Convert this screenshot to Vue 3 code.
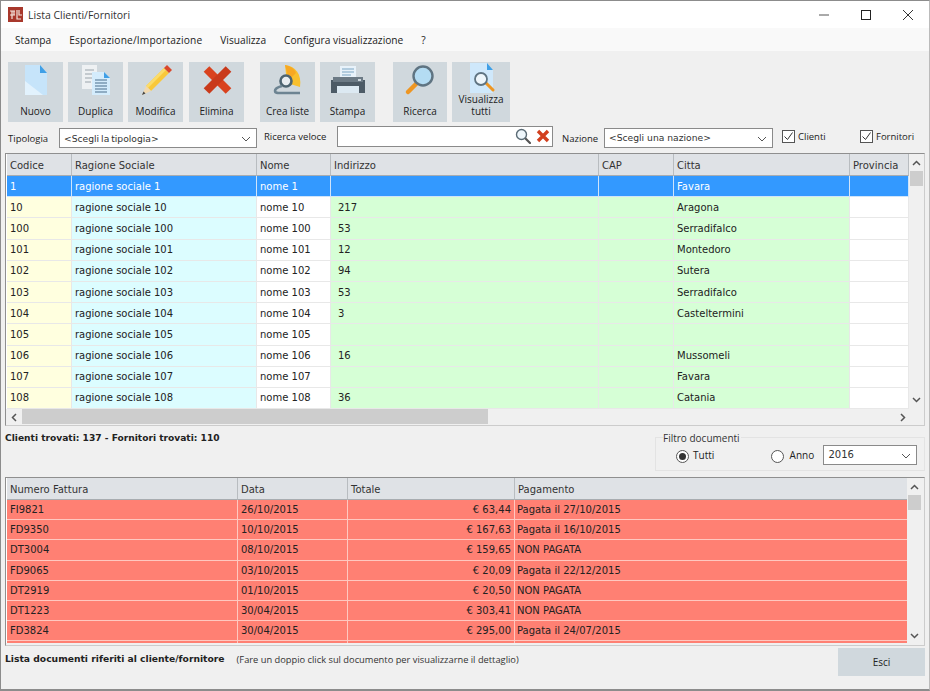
<template>
  <div class="window">
    <div class="titlebar">
      <svg class="app-icon" width="15" height="15" viewBox="0 0 15 15">
        <rect width="15" height="15" fill="#a8382c" />
        <path d="M2 4h5M4 4v8M2 8h5M6 4v4M9 3v9h4M11 3v5h3" fill="none" stroke="#f4e6e0" stroke-width="1.2" />
      </svg>
      <span class="title">Lista Clienti/Fornitori</span>
      <div class="win-controls">
        <svg width="10" height="10" viewBox="0 0 10 10"><path d="M0 5h10" stroke="#555" /></svg>
        <svg width="10" height="10" viewBox="0 0 10 10"><rect x="0.5" y="0.5" width="9" height="9" fill="none" stroke="#222" /></svg>
        <svg width="10" height="10" viewBox="0 0 10 10"><path d="M0 0l10 10M10 0L0 10" stroke="#333" /></svg>
      </div>
    </div>

    <div class="menubar">
      <span v-for="m in menu" :key="m">{{ m }}</span>
    </div>

    <div class="toolbar">
      <div class="tool-group">
        <button class="tool">
          <svg width="34" height="34" viewBox="0 0 34 34">
            <path d="M6 2h15l7 8v22H6z" fill="#c6e4fa" />
            <path d="M6 32V18L24 32z" fill="#e2f2fd" />
            <path d="M21 2l7 8h-7z" fill="#3f9fe6" />
          </svg>
          <span>Nuovo</span>
        </button>
        <button class="tool">
          <svg width="34" height="34" viewBox="0 0 34 34">
            <path d="M3 2h15v24H3z" fill="#eef1f3" />
            <path d="M6 7h9M6 11h9M6 15h9M6 19h6" stroke="#9aa4ab" />
            <path d="M13 9h12l6 6v17H13z" fill="#d4ecfc" />
            <path d="M25 9l6 6h-6z" fill="#3f9fe6" />
            <path d="M16 17h12M16 20h12M16 23h12M16 26h12M16 29h12" stroke="#4a6f8c" />
          </svg>
          <span>Duplica</span>
        </button>
        <button class="tool">
          <svg width="34" height="34" viewBox="0 0 34 34">
            <path d="M7 23L25 5l5 5-18 18z" fill="#f9c83a" />
            <path d="M7 23L25 5l2 2L9 25z" fill="#fbdc6a" />
            <path d="M25 5l3-3 5 5-3 3z" fill="#d9472b" />
            <path d="M7 23l5 5-9 4z" fill="#f1d9b0" />
            <path d="M4.500 28.500l2 2L3 32z" fill="#444" />
          </svg>
          <span>Modifica</span>
        </button>
        <button class="tool">
          <svg width="34" height="34" viewBox="0 0 34 34">
            <path d="M6.500 6l22 22" stroke="#d9421e" stroke-width="8" />
            <path d="M28.500 6l-22 22" stroke="#c93a1b" stroke-width="8" />
          </svg>
          <span>Elimina</span>
        </button>
      </div>
      <div class="tool-group">
        <button class="tool">
          <svg width="34" height="34" viewBox="0 0 34 34">
            <path d="M14 2C24 3 31 11 29 24L16 20z" fill="#f8c02e" />
            <path d="M14 2c5 1 9 3 11 8L18 17z" fill="#f7a823" />
            <circle cx="15" cy="18" r="5.500" fill="#e8edf0" stroke="#4d6470" stroke-width="2.600" />
            <path d="M11 23c-4 1-7 3-7 5 0 2 2 2 5 2h20" fill="none" stroke="#6d8492" stroke-width="2.600" />
          </svg>
          <span>Crea liste</span>
        </button>
        <button class="tool">
          <svg width="36" height="34" viewBox="0 0 36 34">
            <path d="M10 3h16v14H10z" fill="#e8f2fa" />
            <path d="M12 6h12M12 9h12M12 12h9" stroke="#7da6c4" />
            <path d="M1 17h34v13H1z" fill="#4d5b66" />
            <path d="M3 14h30v5H3z" fill="#6c7a85" />
            <path d="M7 23h22v7H7z" fill="#dce9f2" />
            <path d="M28 16h3v2h-3z" fill="#cdd6dc" />
          </svg>
          <span>Stampa</span>
        </button>
      </div>
      <div class="tool-group">
        <button class="tool tool-ricerca">
          <svg width="34" height="34" viewBox="0 0 34 34">
            <path d="M14 20L5 29" stroke="#ee9622" stroke-width="4.500" stroke-linecap="round" />
            <circle cx="20" cy="13" r="9.500" fill="#b4dcf3" stroke="#5f7482" stroke-width="2.400" />
          </svg>
          <span>Ricerca</span>
        </button>
        <button class="tool tool-wide">
          <svg width="28" height="30" viewBox="0 0 28 30">
            <path d="M3 0h17l6 7v23H3z" fill="#cfe8fb" />
            <path d="M20 0l6 7h-6z" fill="#3f9fe6" />
            <path d="M19 20l7 7" stroke="#ee9622" stroke-width="3" stroke-linecap="round" />
            <circle cx="14" cy="16" r="6" fill="#eef6fb" stroke="#5f7482" stroke-width="1.800" />
          </svg>
          <span>Visualizza<br />tutti</span>
        </button>
      </div>
    </div>

    <div class="filters">
      <label class="lbl-tipologia">Tipologia</label>
      <div class="combo combo-tipologia">
        &lt;Scegli la tipologia&gt;
        <svg class="chev" width="10" height="6" viewBox="0 0 10 6"><path d="M1 1l4 4 4-4" fill="none" stroke="#555" /></svg>
      </div>
      <label class="lbl-ricerca">Ricerca veloce</label>
      <div class="search-box">
        <svg width="16" height="16" viewBox="0 0 16 16">
          <path d="M10 10l5 5" stroke="#555" stroke-width="2.200" stroke-linecap="round" />
          <circle cx="6.500" cy="6.500" r="5" fill="#eef6fb" stroke="#5b6b75" stroke-width="1.400" />
        </svg>
        <svg width="14" height="14" viewBox="0 0 14 14">
          <path d="M2 2l10 10M12 2L2 12" stroke="#d2401f" stroke-width="3.400" />
        </svg>
      </div>
      <label class="lbl-nazione">Nazione</label>
      <div class="combo combo-nazione">
        &lt;Scegli una nazione&gt;
        <svg class="chev" width="10" height="6" viewBox="0 0 10 6"><path d="M1 1l4 4 4-4" fill="none" stroke="#555" /></svg>
      </div>
      <div class="check check-clienti">
        <svg width="13" height="13" viewBox="0 0 13 13">
          <rect x="0.500" y="0.500" width="12" height="12" fill="#fff" stroke="#555" />
          <path d="M2.500 6.500l3 3 5-7" fill="none" stroke="#333" />
        </svg>
        Clienti
      </div>
      <div class="check check-fornitori">
        <svg width="13" height="13" viewBox="0 0 13 13">
          <rect x="0.500" y="0.500" width="12" height="12" fill="#fff" stroke="#555" />
          <path d="M2.500 6.500l3 3 5-7" fill="none" stroke="#333" />
        </svg>
        Fornitori
      </div>
    </div>

    <div class="grid-frame clients">
      <div class="grid-main">
        <div class="row head c-cols">
          <div v-for="h in clientHead" :key="h" class="cell">{{ h }}</div>
        </div>
        <div v-for="(r, i) in clients" :key="r[0]" class="row c-cols c-row" :class="{ selected: i === 0 }">
          <div class="cell yellow">{{ r[0] }}</div>
          <div class="cell cyan">{{ 'ragione sociale ' + r[0] }}</div>
          <div class="cell">{{ 'nome ' + r[0] }}</div>
          <div class="cell green addr">{{ r[1] }}</div>
          <div class="cell green"></div>
          <div class="cell green">{{ r[2] }}</div>
          <div class="cell"></div>
        </div>
      </div>
      <div class="vscroll">
        <svg width="9" height="6" viewBox="0 0 9 6"><path d="M1 5l3.500-3.500L8 5" fill="none" stroke="#555" stroke-width="1.500" /></svg>
        <div class="thumb"></div>
        <svg width="9" height="6" viewBox="0 0 9 6"><path d="M1 1l3.500 3.500L8 1" fill="none" stroke="#555" stroke-width="1.500" /></svg>
      </div>
      <div class="hscroll">
        <svg width="6" height="9" viewBox="0 0 6 9"><path d="M5 1L1.500 4.500 5 8" fill="none" stroke="#555" stroke-width="1.500" /></svg>
        <div class="htrack"><div class="hthumb"></div></div>
        <svg width="6" height="9" viewBox="0 0 6 9"><path d="M1 1l3.500 3.500L1 8" fill="none" stroke="#555" stroke-width="1.500" /></svg>
      </div>
    </div>

    <div class="mid">
      <div class="found">Clienti trovati: 137 - Fornitori trovati: 110</div>
      <div class="doc-filter">
        <span class="legend">Filtro documenti</span>
        <span class="radio on"></span>
        <span class="lbl-tutti">Tutti</span>
        <span class="radio"></span>
        <span class="lbl-anno">Anno</span>
        <div class="combo combo-anno">
          2016
          <svg class="chev" width="10" height="6" viewBox="0 0 10 6"><path d="M1 1l4 4 4-4" fill="none" stroke="#555" /></svg>
        </div>
      </div>
    </div>

    <div class="grid-frame docs">
      <div class="grid-main docs-main">
        <div class="row head d-cols">
          <div v-for="h in docHead" :key="h" class="cell">{{ h }}</div>
        </div>
        <div v-for="(d, i) in docs" :key="i" class="row d-cols d-row">
          <div class="cell">{{ d[0] }}</div>
          <div class="cell">{{ d[1] }}</div>
          <div class="cell right">{{ d[2] }}</div>
          <div class="cell">{{ d[3] }}</div>
        </div>
      </div>
      <div class="vscroll">
        <svg width="9" height="6" viewBox="0 0 9 6"><path d="M1 5l3.500-3.500L8 5" fill="none" stroke="#555" stroke-width="1.500" /></svg>
        <div class="thumb"></div>
        <svg width="9" height="6" viewBox="0 0 9 6"><path d="M1 1l3.500 3.500L8 1" fill="none" stroke="#555" stroke-width="1.500" /></svg>
      </div>
    </div>

    <div class="footer">
      <b>Lista documenti riferiti al cliente/fornitore</b>
      <span class="note">(Fare un doppio click sul documento per visualizzarne il dettaglio)</span>
      <button class="esci">Esci</button>
    </div>
  </div>
</template>

<script setup>
const menu = ['Stampa', 'Esportazione/Importazione', 'Visualizza', 'Configura visualizzazione', '?']

const clientHead = ['Codice', 'Ragione Sociale', 'Nome', 'Indirizzo', 'CAP', 'Citta', 'Provincia']
const clients = [
  ['1', '', 'Favara'],
  ['10', '217', 'Aragona'],
  ['100', '53', 'Serradifalco'],
  ['101', '12', 'Montedoro'],
  ['102', '94', 'Sutera'],
  ['103', '53', 'Serradifalco'],
  ['104', '3', 'Casteltermini'],
  ['105', '', ''],
  ['106', '16', 'Mussomeli'],
  ['107', '', 'Favara'],
  ['108', '36', 'Catania']
]

const docHead = ['Numero Fattura', 'Data', 'Totale', 'Pagamento']
const docs = [
  ['FI9821', '26/10/2015', '€ 63,44', 'Pagata il 27/10/2015'],
  ['FD9350', '10/10/2015', '€ 167,63', 'Pagata il 16/10/2015'],
  ['DT3004', '08/10/2015', '€ 159,65', 'NON PAGATA'],
  ['FD9065', '03/10/2015', '€ 20,09', 'Pagata il 22/12/2015'],
  ['DT2919', '01/10/2015', '€ 20,50', 'NON PAGATA'],
  ['DT1223', '30/04/2015', '€ 303,41', 'NON PAGATA'],
  ['FD3824', '30/04/2015', '€ 295,00', 'Pagata il 24/07/2015'],
  ['', '', '', '']
]
</script>

<style>
html, body {
  margin: 0;
  background: #f0f0f0;
}
</style>

<style scoped>
.window {
  box-sizing: border-box;
  width: 930px;
  height: 691px;
  overflow: hidden;
  background: #f0f0f0;
  border: 1px solid #8c8c8c;
  border-bottom-width: 2px;
  border-right-color: #bbb;
  font-family: "Open Sans", sans-serif;
  font-size: 10px;
  color: #222;
}

.titlebar {
  height: 27px;
  background: #fff;
  display: flex;
  align-items: center;
  padding-left: 7px;
}
.app-icon {
  margin-right: 5px;
}
.title {
  font-size: 10.5px;
  color: #333;
}
.win-controls {
  margin-left: auto;
  display: flex;
  gap: 32px;
  padding-right: 16px;
}

.menubar {
  height: 23px;
  background: #f9f9f9;
  display: flex;
  align-items: center;
  padding-left: 14px;
  gap: 18px;
  font-size: 10.2px;
  color: #222;
}
.menubar span:nth-child(2) {
  letter-spacing: 0.16px;
}

.toolbar {
  display: flex;
  padding: 11px 0 0 7px;
  gap: 16px;
  height: 60px;
}
.tool-group {
  display: flex;
  gap: 5px;
}
.tool-group:last-child {
  margin-left: 2px;
}
.tool {
  box-sizing: border-box;
  position: relative;
  width: 55px;
  height: 60px;
  border: none;
  padding: 0;
  background: #d0d8dd;
  font-family: inherit;
  font-size: 10px;
  color: #222;
  display: flex;
  flex-direction: column;
  align-items: center;
}
.tool:nth-child(4) {
  margin-left: 1px;
}
.tool svg {
  margin-top: 1px;
  flex: none;
}
.tool span {
  position: absolute;
  left: 0;
  right: 0;
  bottom: 5px;
  line-height: 12px;
  text-align: center;
}
.tool-ricerca {
  width: 54px;
}
.tool-wide {
  width: 58px;
}

.filters {
  height: 30px;
  margin-top: 1px;
  display: flex;
  align-items: center;
  font-size: 9.5px;
}
.lbl-tipologia {
  margin-left: 7px;
  width: 51px;
}
.combo {
  box-sizing: border-box;
  height: 20px;
  background: #fff;
  border: 1px solid #8a8a8a;
  display: flex;
  align-items: center;
  padding-left: 4px;
  font-family: "DejaVu Sans", sans-serif;
  font-size: 9.2px;
  color: #333;
}
.chev {
  margin-left: auto;
  margin-right: 5px;
  margin-top: 2px;
}
.combo-tipologia {
  width: 198px;
  word-spacing: -1px;
}
.lbl-ricerca {
  margin-left: 7px;
  width: 73px;
  margin-top: -4px;
}
.search-box {
  box-sizing: border-box;
  width: 216px;
  height: 21px;
  margin-top: -4px;
  padding-right: 2px;
  background: #fff;
  border: 1px solid #8a8a8a;
  display: flex;
  align-items: center;
  justify-content: flex-end;
  gap: 5px;
}
.lbl-nazione {
  margin-left: 9px;
  width: 42px;
}
.combo-nazione {
  width: 169px;
  margin-top: -1px;
}
.check {
  display: flex;
  align-items: center;
  gap: 3px;
  margin-top: -3px;
}
.check-clienti {
  margin-left: 9px;
  width: 78px;
}
.check-fornitori {
  width: 62px;
}

.grid-frame {
  box-sizing: border-box;
  position: relative;
  margin-left: 4px;
  width: 920px;
  background: #f0f0f0;
  border: 1px solid #8f8f8f;
  border-bottom-color: #ccc;
  border-right-color: #ccc;
  display: grid;
  grid-template-columns: 1fr 15px;
}
.clients {
  height: 273px;
  grid-template-rows: 255px 16px;
}
.docs {
  height: 169px;
  grid-template-columns: 901px 15px;
}
.grid-main {
  overflow: hidden;
  background: #fff;
  padding-left: 1px;
}
.docs-main {
  height: 165px;
}
.row {
  display: grid;
  font-family: "DejaVu Sans", sans-serif;
  font-size: 10px;
  color: #222;
}
.c-cols {
  grid-template-columns: 65px 185px 74px 268px 75px 176px 59px;
}
.d-cols {
  grid-template-columns: 231px 110px 167px 393px;
}
.cell {
  box-sizing: border-box;
  padding-left: 3px;
  white-space: nowrap;
  overflow: hidden;
  border-right: 1px solid #e8e8e8;
  border-bottom: 1px solid #e8e8e8;
  display: flex;
  align-items: center;
}
.head {
  height: 22px;
  background: #dfe2e6;
  color: #333;
}
.head .cell {
  padding-top: 2px;
  border-right: 1px solid #b8bcc0;
  border-bottom: 1px solid #a8acb0;
}
.c-row {
  height: 21.2px;
}
.yellow {
  background: #ffffdf;
}
.cyan {
  background: #dcfdff;
}
.green {
  background: #d6ffd6;
}
.addr {
  padding-left: 7px;
}
.selected .cell {
  background: #3399ff;
  color: #fff;
  border-color: #cfe4fa;
}
.d-row {
  height: 20.2px;
}
.d-row .cell {
  background: #ff8073;
  border-color: #ffc8c0;
}
.d-row .cell:last-child {
  padding-left: 2px;
}
.right {
  justify-content: flex-end;
  padding-right: 3px;
}

.vscroll {
  background: #f0f0f0;
  display: flex;
  flex-direction: column;
  align-items: center;
  padding: 6px 0;
  box-sizing: border-box;
}
.thumb {
  width: 13px;
  height: 15px;
  background: #cdcdcd;
  margin-top: 5px;
}
.vscroll svg:last-child {
  margin-top: auto;
}
.hscroll {
  grid-column: 1 / 3;
  height: 16px;
  background: #f0f0f0;
  display: flex;
  align-items: center;
  padding: 0 18px 0 5px;
}
.htrack {
  flex: 1;
  margin-left: 5px;
  height: 16px;
}
.hthumb {
  width: 466px;
  height: 15px;
  background: #cdcdcd;
}

.mid {
  height: 51px;
  display: flex;
  justify-content: space-between;
}
.found {
  margin: 7px 0 0 4px;
  font-family: "DejaVu Sans", sans-serif;
  font-size: 9.1px;
  font-weight: bold;
  color: #222;
}
.doc-filter {
  box-sizing: border-box;
  position: relative;
  width: 270px;
  height: 34px;
  margin: 11px 4px 0 0;
  padding: 4px 7px 0 20px;
  border: 1px solid #e3e3e3;
  font-size: 10px;
  display: flex;
  align-items: center;
}
.legend {
  position: absolute;
  left: 7px;
  top: -6px;
  padding-right: 1px;
  line-height: 12px;
  background: #f0f0f0;
  color: #333;
}
.radio {
  box-sizing: border-box;
  flex: none;
  width: 13px;
  height: 13px;
  border: 1px solid #555;
  border-radius: 50%;
  background: #fff;
  position: relative;
}
.radio.on::after {
  content: "";
  position: absolute;
  inset: 2px;
  border-radius: 50%;
  background: #333;
}
.lbl-tutti {
  margin: -2px 0 0 4px;
  width: 78px;
}
.lbl-anno {
  margin: -2px 0 0 6px;
  width: 34px;
}
.combo-anno {
  width: 94px;
  margin-top: -3px;
  font-size: 10px;
}

.footer {
  display: flex;
  align-items: flex-start;
  padding-left: 4px;
  margin-top: 2px;
}
.footer b {
  margin-top: 5px;
  font-family: "DejaVu Sans", sans-serif;
  font-size: 9.2px;
  color: #222;
}
.note {
  margin: 5px 0 0 12px;
  font-size: 9.3px;
  color: #333;
}
.esci {
  box-sizing: border-box;
  width: 87px;
  height: 28px;
  margin-left: auto;
  margin-right: 4px;
  border: none;
  background: #d0d8dd;
  font-family: inherit;
  font-size: 10px;
  color: #222;
}
</style>
